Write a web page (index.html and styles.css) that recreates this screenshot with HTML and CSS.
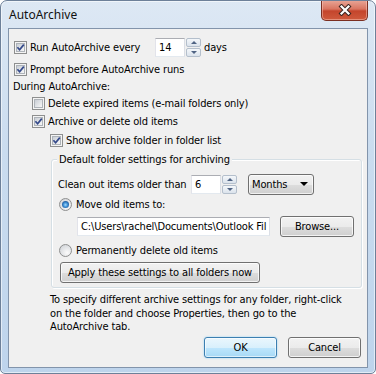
FILE: index.html
```html
<!DOCTYPE html>
<html lang="en">
<head>
<meta charset="UTF-8">
<title>AutoArchive</title>
<link rel="stylesheet" href="styles.css">
</head>
<body>

<div class="window">

<div class="titlebar">
<span class="title">AutoArchive</span>
<div class="close">
<svg width="14" height="12" viewBox="0 0 14 12">
<path d="M3.5 2.5 L10.5 9.5 M10.5 2.5 L3.5 9.5" stroke="#3b2622" stroke-width="4.2" stroke-linecap="square"/>
<path d="M3.5 2.5 L10.5 9.5 M10.5 2.5 L3.5 9.5" stroke="#fff" stroke-width="2.2" stroke-linecap="square"/>
</svg>
</div>
</div>

<div class="client">

<div class="row lvl1 r-run">
<span class="cb"><i><svg width="7" height="7" viewBox="0 0 7 7"><path d="M0.4 3.2 L2.6 5.7 L6.8 0.6" /></svg></i></span>
<span class="lbl w-run">Run AutoArchive every</span>
<span class="edit">14</span>
<span class="arrows"><b class="up"></b><b class="dn"></b></span>
<span class="after">days</span>
</div>

<div class="row lvl1 r-prompt">
<span class="cb"><i><svg width="7" height="7" viewBox="0 0 7 7"><path d="M0.4 3.2 L2.6 5.7 L6.8 0.6" /></svg></i></span>
<span class="lbl">Prompt before AutoArchive runs</span>
</div>

<div class="row r-during">During AutoArchive:</div>

<div class="row lvl2 r-delete">
<span class="cb"><i></i></span>
<span class="lbl">Delete expired items (e-mail folders only)</span>
</div>

<div class="row lvl2 r-archive">
<span class="cb"><i><svg width="7" height="7" viewBox="0 0 7 7"><path d="M0.4 3.2 L2.6 5.7 L6.8 0.6" /></svg></i></span>
<span class="lbl">Archive or delete old items</span>
</div>

<div class="row lvl3 r-show">
<span class="cb"><i><svg width="7" height="7" viewBox="0 0 7 7"><path d="M0.4 3.2 L2.6 5.7 L6.8 0.6" /></svg></i></span>
<span class="lbl">Show archive folder in folder list</span>
</div>

<div class="group">
<div class="group-label">Default folder settings for archiving</div>

<div class="row r-clean">
<span class="w-clean">Clean out items older than</span>
<span class="edit">6</span>
<span class="arrows"><b class="up"></b><b class="dn"></b></span>
<span class="combo">Months<b class="caret"></b></span>
</div>

<div class="row r-move">
<span class="radio on"></span>
<span class="rlbl">Move old items to:</span>
</div>

<div class="row r-path">
<span class="edit path">C:\Users\rachel\Documents\Outlook Fil</span>
<span class="btn browse">Browse...</span>
</div>

<div class="row r-perm">
<span class="radio"></span>
<span class="rlbl">Permanently delete old items</span>
</div>

<div class="row r-apply">
<span class="btn apply">Apply these settings to all folders now</span>
</div>
</div>

<p class="note">To specify different archive settings for any folder, right-click<br>on the folder and choose Properties, then go to the<br>AutoArchive tab.</p>

<div class="actions">
<span class="btn ok">OK</span>
<span class="btn">Cancel</span>
</div>

</div>

</div>

</body>
</html>
```

FILE: styles.css
```css
*{box-sizing:border-box;}

body{
margin:0;
background:#fff;
font-family:"DejaVu Sans Condensed","DejaVu Sans",sans-serif;
font-size:11px;
letter-spacing:-0.14px;
color:#000;
}

.window{
width:376px;
height:374px;
display:flex;
flex-direction:column;
padding:0 7px 5px;
border:1px solid #6d8099;
border-radius:7px 7px 5px 5px;
background:linear-gradient(#dde8f4,#cadcef 40%,#bed4ec);
box-shadow:inset 0 0 0 1px rgba(255,255,255,.55);
overflow:hidden;
}

/* title bar */

.titlebar{
height:27px;
display:flex;
align-items:flex-start;
justify-content:space-between;
flex:none;
}

.title{
font-family:"Noto Sans",sans-serif;
font-size:12px;
letter-spacing:0;
line-height:16px;
margin:6px 0 0 1px;
color:#111;
}

.close{
width:47px;
height:21px;
margin-top:-1px;
border:1px solid #7a2f22;
border-top:none;
border-radius:0 0 5px 5px;
background:linear-gradient(#e9a899,#d97561 45%,#c4452c 55%,#cf5a3d);
box-shadow:inset 0 0 0 1px rgba(255,210,200,.45);
display:flex;
align-items:center;
justify-content:center;
}

/* client area */

.client{
flex:1;
display:flex;
flex-direction:column;
border:1px solid #8294ab;
background:#f0f0f0;
padding:9px 0 9px;
}

.row{
display:flex;
align-items:center;
white-space:nowrap;
}

.lvl1{padding-left:5px;}
.lvl2{padding-left:23px;}
.lvl3{padding-left:41px;}

.r-run{height:19px;}
.r-prompt{height:18px;margin-top:3px;}
.r-during{height:17px;padding-left:4px;}
.r-delete{height:17px;}
.r-archive{height:18px;}
.r-show{height:18px;margin-top:1px;}

.lbl{margin-left:3px;}
.w-run{width:125px;}

/* checkbox */

.cb{
width:13px;
height:13px;
flex:none;
display:flex;
padding:1px;
border:1px solid #8e8f8f;
background:#f4f4f4;
}

.cb i{
flex:1;
display:flex;
align-items:center;
justify-content:center;
border:1px solid #aeb3b9;
background:linear-gradient(135deg,#c9ced5,#f7f7f7);
}

.cb svg{
overflow:visible;
}

.cb path{
fill:none;
stroke:#34498a;
stroke-width:1.7;
}

/* radio */

.radio{
width:13px;
height:13px;
flex:none;
border-radius:50%;
border:1px solid #8e8f8f;
background:radial-gradient(circle at 65% 70%,#fbfbfb,#d4d7db 80%);
display:flex;
align-items:center;
justify-content:center;
}

.radio.on::after{
content:"";
width:7px;
height:7px;
border-radius:50%;
background:radial-gradient(circle at 50% 55%,#a7dcfb 0,#3c8fd6 40%,#143f7c 90%);
}

.rlbl{margin-left:4px;}

/* edit + spinner */

.edit{
width:30px;
height:19px;
flex:none;
border:1px solid;
border-color:#abadb3 #dbdfe6 #e3e9ef #e2e3ea;
background:#fff;
padding-left:3px;
line-height:17px;
overflow:hidden;
}

.arrows{
width:15px;
height:19px;
flex:none;
margin-left:1px;
display:flex;
flex-direction:column;
gap:1px;
}

.arrows b{
flex:1;
display:flex;
align-items:center;
justify-content:center;
border:1px solid #b4bfcc;
border-radius:2px;
background:linear-gradient(#f4f7fa,#dbe3ec);
}

.arrows .up::after{
content:"";
border-left:3px solid transparent;
border-right:3px solid transparent;
border-bottom:3px solid #4f6383;
}

.arrows .dn::after{
content:"";
border-left:3px solid transparent;
border-right:3px solid transparent;
border-top:3px solid #4f6383;
}

.after{margin-left:3px;}

/* group box */

.group{
margin:10px 5px 0 42px;
border:1px solid #d5dfe5;
border-radius:3px;
box-shadow:1px 1px 0 #fff, inset 1px 1px 0 #fff;
padding:0 0 4px;
}

.group-label{
width:fit-content;
margin:-8px 0 0 5px;
padding:0 2px;
line-height:15px;
background:#f0f0f0;
}

.r-clean{height:20px;margin-top:7px;padding-left:6px;}
.w-clean{width:133px;}

.combo{
width:66px;
height:21px;
margin-left:11px;
display:flex;
align-items:center;
justify-content:space-between;
padding:0 5px 0 3px;
border:1px solid #707070;
border-radius:3px;
background:linear-gradient(#f2f2f2,#ebebeb 50%,#dddddd 51%,#cfcfcf);
box-shadow:inset 0 0 0 1px rgba(255,255,255,.7);
}

.caret{
border-left:4px solid transparent;
border-right:4px solid transparent;
border-top:4px solid #000;
}

.r-move{height:18px;margin-top:1px;padding-left:7px;}

.r-path{height:21px;margin-top:3px;padding-left:25px;}

.edit.path{
width:193px;
white-space:nowrap;
}

.r-perm{height:18px;margin-top:4px;padding-left:7px;}

.r-apply{height:21px;margin-top:3px;padding-left:8px;}

/* buttons */

.btn{
height:21px;
flex:none;
display:flex;
align-items:center;
justify-content:center;
border:1px solid #707070;
border-radius:3px;
background:linear-gradient(#f2f2f2,#ebebeb 50%,#dddddd 51%,#cfcfcf);
box-shadow:inset 0 0 0 1px rgba(255,255,255,.75);
width:73px;
}

.browse{
width:74px;
margin-left:10px;
}

.apply{
width:200px;
}

.btn.ok{
border-color:#3c7fb1;
background:linear-gradient(#eaf6fd,#d9f0fc 50%,#bee6fd 51%,#a7d9f5);
box-shadow:inset 0 0 0 1px rgba(255,255,255,.6),0 0 2px #8fd0f5;
}

.note{
margin:5px 0 0 41px;
line-height:13.5px;
}

.actions{
margin-top:auto;
display:flex;
justify-content:flex-end;
gap:11px;
padding-right:6px;
}
```
